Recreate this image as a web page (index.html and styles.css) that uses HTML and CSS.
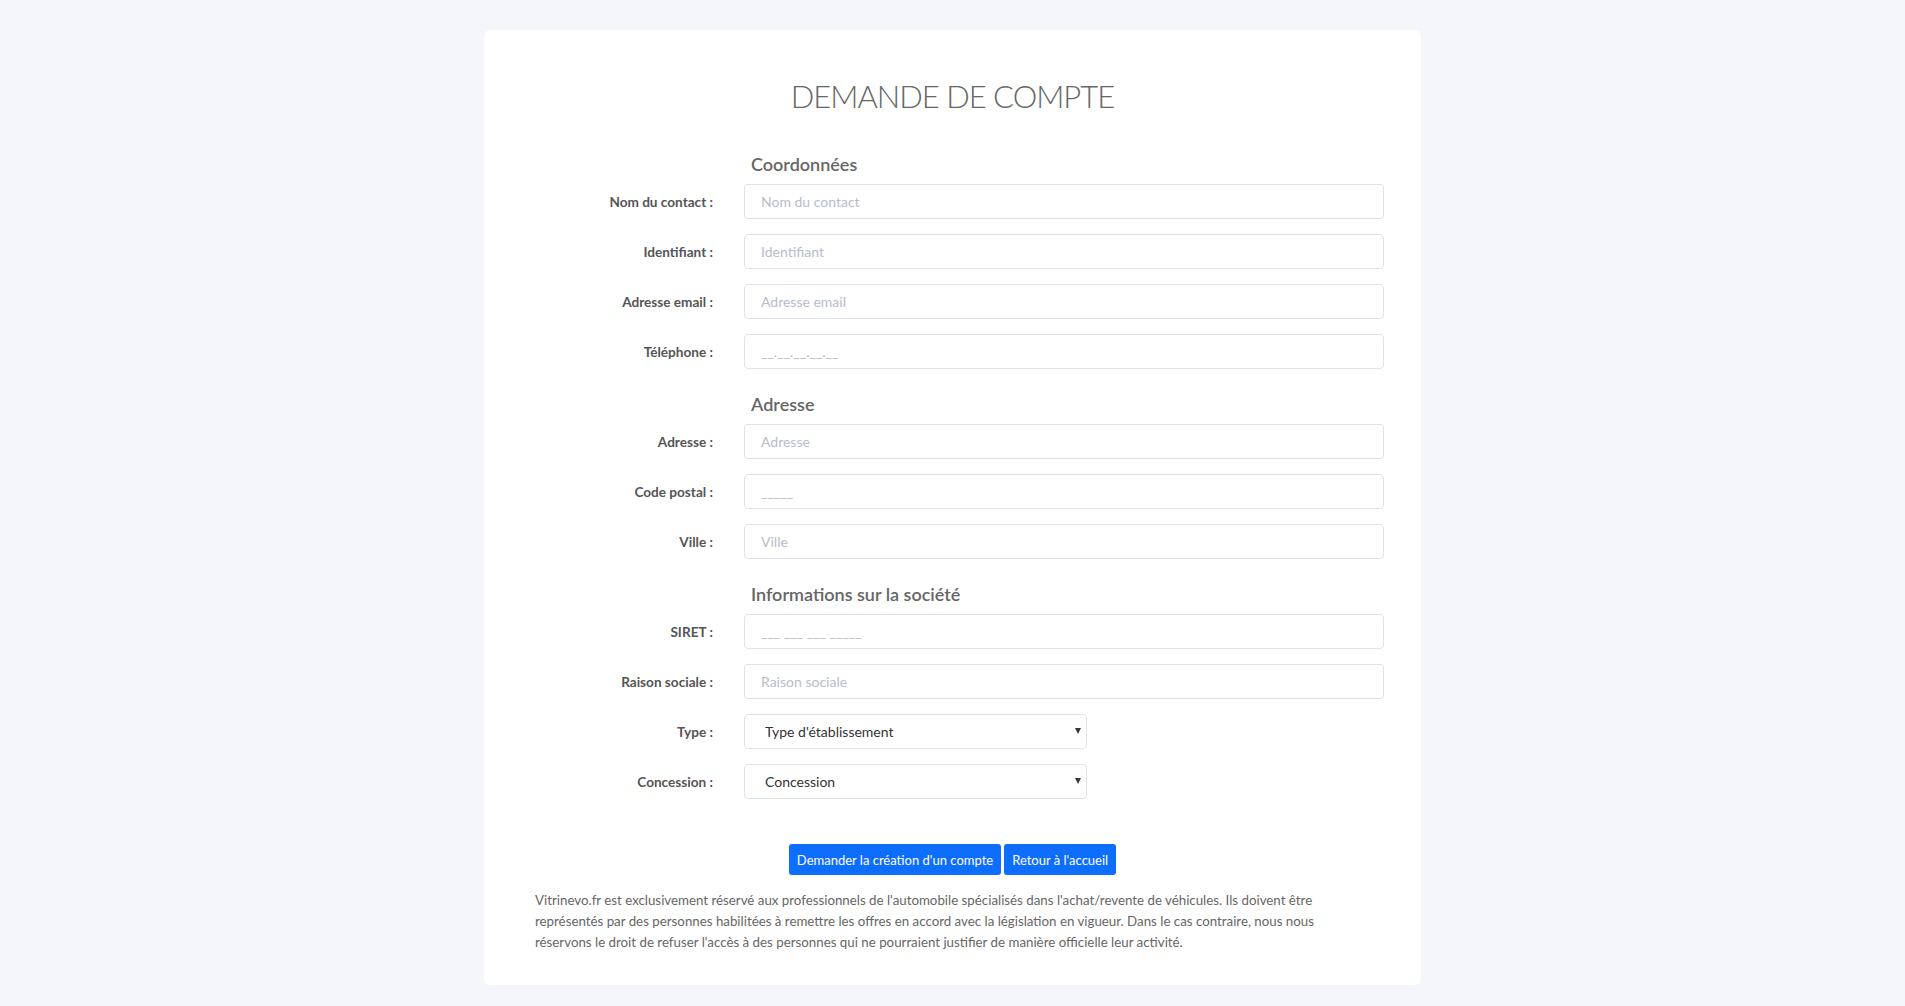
FILE: index.html
```html
<!DOCTYPE html>
<html lang="fr">
<head>
<meta charset="utf-8">
<title>Demande de compte</title>
<link rel="stylesheet" href="styles.css">
</head>
<body>
<main class="card">
  <h1 class="title">DEMANDE DE COMPTE</h1>
  <form class="form">
    <section class="section">
      <h2 class="section-title">Coordonnées</h2>
      <div class="row"><label class="label">Nom du contact :</label><input class="input" type="text" placeholder="Nom du contact"></div>
      <div class="row"><label class="label">Identifiant :</label><input class="input" type="text" placeholder="Identifiant"></div>
      <div class="row"><label class="label">Adresse email :</label><input class="input" type="text" placeholder="Adresse email"></div>
      <div class="row"><label class="label">Téléphone :</label><input class="input" type="text" placeholder="__.__.__.__.__"></div>
    </section>
    <section class="section">
      <h2 class="section-title">Adresse</h2>
      <div class="row"><label class="label">Adresse :</label><input class="input" type="text" placeholder="Adresse"></div>
      <div class="row"><label class="label">Code postal :</label><input class="input" type="text" placeholder="_____"></div>
      <div class="row"><label class="label">Ville :</label><input class="input" type="text" placeholder="Ville"></div>
    </section>
    <section class="section">
      <h2 class="section-title">Informations sur la société</h2>
      <div class="row"><label class="label">SIRET :</label><input class="input" type="text" placeholder="___ ___ ___ _____"></div>
      <div class="row"><label class="label">Raison sociale :</label><input class="input" type="text" placeholder="Raison sociale"></div>
      <div class="row"><label class="label">Type :</label><div class="select-wrap"><select class="select"><option>Type d'établissement</option></select></div></div>
      <div class="row"><label class="label">Concession :</label><div class="select-wrap"><select class="select"><option>Concession</option></select></div></div>
    </section>
    <div class="actions">
      <button type="button" class="btn">Demander la création d'un compte</button>
      <button type="button" class="btn">Retour à l'accueil</button>
    </div>
  </form>
  <p class="notice">Vitrinevo.fr est exclusivement réservé aux professionnels de l'automobile spécialisés dans l'achat/revente de véhicules. Ils doivent être représentés par des personnes habilitées à remettre les offres en accord avec la législation en vigueur. Dans le cas contraire, nous nous réservons le droit de refuser l'accès à des personnes qui ne pourraient justifier de manière officielle leur activité.</p>
</main>
</body>
</html>
```

FILE: styles.css
```css
* { box-sizing: border-box; }
html, body { margin: 0; padding: 0; }
body {
  background: #f5f6fa;
  font-family: "Lato", "Liberation Sans", sans-serif;
  color: #555;
}
.card {
  width: 937px;
  margin: 30px auto 21px;
  background: #fff;
  border-radius: 6px;
  padding: 46px 37px 32px 51px;
}
.title {
  margin: 0 0 29px;
  padding-right: 14px;
  text-align: center;
  font-size: 31px;
  line-height: 40px;
  font-weight: 300;
  color: #666;
  letter-spacing: -1px;
}
.form { margin: 0; }
.section-title {
  margin: 0 0 0 209px;
  padding-left: 7px;
  height: 39px;
  line-height: 39px;
  font-size: 18px;
  font-weight: 600;
  color: #666;
}
.section + .section .section-title { height: 40px; line-height: 40px; }
.row {
  display: grid;
  grid-template-columns: 178px 640px;
  column-gap: 31px;
  align-items: center;
  margin-bottom: 15px;
}
.label {
  text-align: right;
  font-size: 13.6px;
  font-weight: 700;
  color: #555;
}
.input {
  height: 35px;
  width: 100%;
  border: 1px solid #dde3e8;
  border-radius: 4px;
  padding: 0 16px;
  font-family: inherit;
  font-size: 14px;
  color: #333;
  background: #fff;
  outline: none;
}
.input::placeholder { color: #b7bccb; }
.select-wrap {
  position: relative;
  width: 343px;
}
.select-wrap::after {
  content: "";
  position: absolute;
  right: 6px;
  top: 14px;
  border-left: 3.5px solid transparent;
  border-right: 3.5px solid transparent;
  border-top: 6px solid #333a45;
  pointer-events: none;
}
.select {
  appearance: none;
  -webkit-appearance: none;
  width: 100%;
  height: 35px;
  border: 1px solid #dde3e8;
  border-radius: 4px;
  padding: 0 20px;
  font-family: inherit;
  font-size: 14px;
  color: #333;
  background: #fff;
  outline: none;
}
.actions {
  display: flex;
  justify-content: center;
  gap: 3px;
  margin-top: 45px;
  padding-right: 14px;
}
.btn {
  height: 31px;
  border: 0;
  border-radius: 3px;
  background: #0d6efd;
  color: #fff;
  font-family: inherit;
  font-size: 13px;
  padding: 0 8px;
}
.notice {
  margin: 15px 14px 0 0;
  font-size: 13.3px;
  line-height: 21px;
  color: #666;
}
```
